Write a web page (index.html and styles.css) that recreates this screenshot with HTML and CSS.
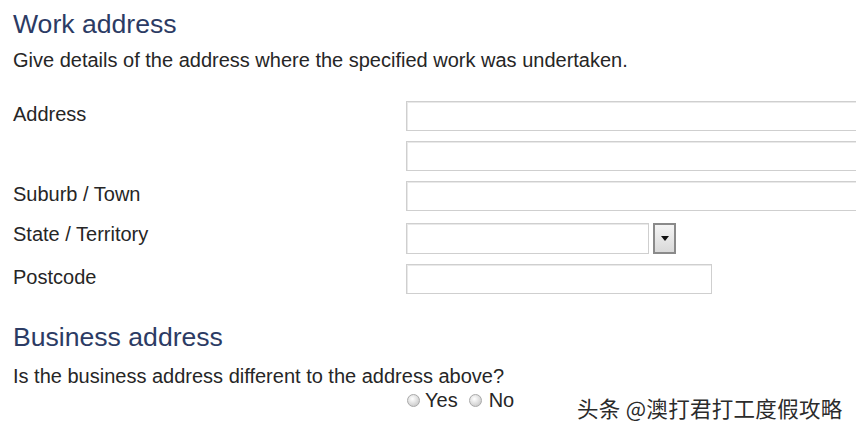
FILE: index.html
```html
<!DOCTYPE html>
<html lang="en">
<head>
<meta charset="utf-8">
<title>Work address</title>
<link rel="stylesheet" href="styles.css">
</head>
<body>
<main class="page">
  <section class="section">
    <h2 class="heading">Work address</h2>
    <p class="intro">Give details of the address where the specified work was undertaken.</p>
    <div class="form">
      <label class="label">Address</label>
      <div class="fields">
        <div class="input wide"></div>
        <div class="input wide"></div>
      </div>
      <label class="label">Suburb / Town</label>
      <div class="fields"><div class="input wide"></div></div>
      <label class="label">State / Territory</label>
      <div class="fields">
        <div class="select">
          <div class="input select-box"></div>
          <div class="select-btn"><span class="arrow"></span></div>
        </div>
      </div>
      <label class="label">Postcode</label>
      <div class="fields"><div class="input short"></div></div>
    </div>
  </section>
  <section class="section second">
    <h2 class="heading">Business address</h2>
    <p class="question">Is the business address different to the address above?</p>
    <div class="radios">
      <span class="radio"></span><span class="radio-label">Yes</span>
      <span class="radio"></span><span class="radio-label">No</span>
    </div>
  </section>
</main>
<div class="watermark">头条 @澳打君打工度假攻略</div>
</body>
</html>
```
FILE: styles.css
```css
html, body {
  margin: 0;
  padding: 0;
  background: #ffffff;
}
body {
  width: 856px;
  height: 434px;
  overflow: hidden;
  position: relative;
  font-family: "Liberation Sans", Arial, sans-serif;
  color: #262626;
}
.page {
  padding: 8px 0 0 13px;
}
.heading {
  margin: 0;
  font-weight: normal;
  font-size: 26.6px;
  line-height: 32px;
  color: #2c3b64;
}
.intro {
  margin: 9px 0 0 0;
  font-size: 20px;
  line-height: 22px;
}
.form {
  display: grid;
  grid-template-columns: 393px 1fr;
  row-gap: 10px;
  margin-top: 30px;
}
.label {
  font-size: 20px;
  line-height: 22px;
  padding-top: 2px;
}
.fields {
  display: flex;
  flex-direction: column;
  gap: 10px;
}
.input {
  box-sizing: border-box;
  height: 30px;
  border: 1px solid #cfcfcf;
  box-shadow: inset 1px 1px 0 #e9e9e9;
  background: #fff;
}
.wide {
  width: 460px;
}
.short {
  width: 306px;
}
.select {
  display: flex;
  align-items: flex-start;
  gap: 4px;
  height: 31px;
  margin-top: 2px;
}
.select-box {
  width: 243px;
  height: 31px;
}
.select-btn {
  box-sizing: border-box;
  width: 23px;
  height: 31px;
  border: 2px solid #8a8a8a;
  background: linear-gradient(#f4f4f4, #d9d9d9);
  display: flex;
  align-items: center;
  justify-content: center;
}
.arrow {
  width: 0;
  height: 0;
  border-left: 4px solid transparent;
  border-right: 4px solid transparent;
  border-top: 5px solid #111;
}
.second {
  margin-top: 27px;
}
.question {
  margin: 12px 0 0 0;
  font-size: 20px;
  line-height: 22px;
}
.radios {
  display: flex;
  align-items: center;
  margin: 2px 0 0 394px;
  font-size: 20px;
  line-height: 22px;
}
.radio {
  box-sizing: border-box;
  width: 13px;
  height: 13px;
  border-radius: 50%;
  border: 1px solid #a9a9a9;
  background: radial-gradient(circle at 40% 35%, #ffffff 0, #e2e2e2 45%, #bdbdbd 100%);
  margin-right: 5px;
}
.radio-label {
  margin-right: 11px;
}
.radio-label + .radio + .radio-label {
  margin-left: 2px;
}
.watermark {
  position: absolute;
  left: 577px;
  top: 393px;
  font-family: "Noto Sans CJK SC", sans-serif;
  font-size: 21.5px;
  line-height: 30px;
  color: #2b2b2b;
  text-shadow: 1px 1px 0 #ffffff;
  letter-spacing: 0.3px;
}
```
